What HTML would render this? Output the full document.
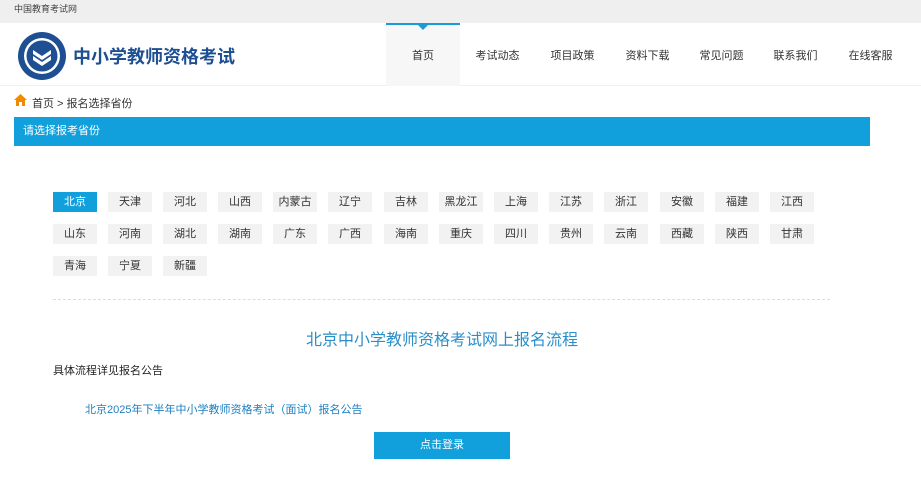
<!DOCTYPE html>
<html><head><meta charset="utf-8"><style>
*{margin:0;padding:0;box-sizing:border-box}
body{width:921px;height:500px;overflow:hidden;background:#fff;font-family:"Liberation Sans","Noto Sans CJK SC",sans-serif;color:#333;position:relative}
.a{position:absolute}
.top{left:0;top:0;width:921px;height:23px;background:#efefef;font-size:9px;line-height:18px;padding-left:14px;color:#444}
.hdr{left:0;top:23px;width:921px;height:63px;background:#fff;border-bottom:1px solid #f0f0f0}
.nav{top:23px;height:63px;line-height:66px;font-size:11px;text-align:center;color:#333}
.prov{width:44px;height:20px;line-height:20px;text-align:center;font-size:11px;background:#f2f2f2;color:#333}
</style></head><body>
<div class="a top">中国教育考试网</div>
<div class="a hdr"></div>
<svg class="a" style="left:17px;top:31px" width="50" height="50" viewBox="0 0 50 50">
<circle cx="25" cy="25" r="24" fill="#1e4f92"/><circle cx="25" cy="25" r="18" fill="#fff"/><circle cx="25" cy="25" r="15.5" fill="#1e4f92"/>
<path d="M16 19 L25 25 L34 19 L34 23 L25 29 L16 23Z M16 25 L25 31 L34 25 L34 29 L25 35 L16 29Z" fill="#fff"/>
</svg>
<div class="a" style="left:73px;top:43px;font-size:18px;color:#1e4f92;font-weight:bold">中小学教师资格考试</div>
<div class="a" style="left:386px;top:23px;width:74px;height:63px;background:#f7f7f7;border-top:2px solid #1a9ad6"></div>
<div class="a" style="left:418px;top:25px;width:0;height:0;border-left:5px solid transparent;border-right:5px solid transparent;border-top:5px solid #1a9ad6"></div>
<div class="a nav" style="left:386px;width:74px">首页</div>
<div class="a nav" style="left:460px;width:75px">考试动态</div>
<div class="a nav" style="left:535px;width:75px">项目政策</div>
<div class="a nav" style="left:610px;width:75px">资料下载</div>
<div class="a nav" style="left:684px;width:75px">常见问题</div>
<div class="a nav" style="left:758px;width:75px">联系我们</div>
<div class="a nav" style="left:833px;width:75px">在线客服</div>
<svg class="a" style="left:14px;top:94px" width="13" height="12" viewBox="0 0 13 12"><path d="M6.5 0 L13 6 L11 6 L11 12 L8 12 L8 8 L5 8 L5 12 L2 12 L2 6 L0 6Z" fill="#f08a00"/></svg>
<div class="a" style="left:32px;top:95px;font-size:11px;color:#333">首页 &gt; 报名选择省份</div>
<div class="a" style="left:14px;top:117px;width:856px;height:29px;background:#12a0dc;color:#fff;font-size:11px;line-height:28px;padding-left:9px">请选择报考省份</div>
<div class="a" style="left:53px;top:299px;width:777px;border-top:1px dashed #ddd"></div>
<div class="a" style="left:0;top:326px;width:884px;text-align:center;font-size:16px;color:#2a8fc8">北京中小学教师资格考试网上报名流程</div>
<div class="a" style="left:53px;top:362px;font-size:11px;color:#222">具体流程详见报名公告</div>
<div class="a" style="left:85px;top:401px;font-size:11px;color:#1d7fc0">北京2025年下半年中小学教师资格考试（面试）报名公告</div>
<div class="a" style="left:374px;top:432px;width:136px;height:27px;background:#12a0dc;color:#fff;font-size:11px;text-align:center;line-height:27px">点击登录</div>
<div class="a prov" style="left:53px;top:192px;background:#12a0dc;color:#fff">北京</div>
<div class="a prov" style="left:108px;top:192px">天津</div>
<div class="a prov" style="left:163px;top:192px">河北</div>
<div class="a prov" style="left:218px;top:192px">山西</div>
<div class="a prov" style="left:273px;top:192px">内蒙古</div>
<div class="a prov" style="left:328px;top:192px">辽宁</div>
<div class="a prov" style="left:384px;top:192px">吉林</div>
<div class="a prov" style="left:439px;top:192px">黑龙江</div>
<div class="a prov" style="left:494px;top:192px">上海</div>
<div class="a prov" style="left:549px;top:192px">江苏</div>
<div class="a prov" style="left:604px;top:192px">浙江</div>
<div class="a prov" style="left:660px;top:192px">安徽</div>
<div class="a prov" style="left:715px;top:192px">福建</div>
<div class="a prov" style="left:770px;top:192px">江西</div>
<div class="a prov" style="left:53px;top:224px">山东</div>
<div class="a prov" style="left:108px;top:224px">河南</div>
<div class="a prov" style="left:163px;top:224px">湖北</div>
<div class="a prov" style="left:218px;top:224px">湖南</div>
<div class="a prov" style="left:273px;top:224px">广东</div>
<div class="a prov" style="left:328px;top:224px">广西</div>
<div class="a prov" style="left:384px;top:224px">海南</div>
<div class="a prov" style="left:439px;top:224px">重庆</div>
<div class="a prov" style="left:494px;top:224px">四川</div>
<div class="a prov" style="left:549px;top:224px">贵州</div>
<div class="a prov" style="left:604px;top:224px">云南</div>
<div class="a prov" style="left:660px;top:224px">西藏</div>
<div class="a prov" style="left:715px;top:224px">陕西</div>
<div class="a prov" style="left:770px;top:224px">甘肃</div>
<div class="a prov" style="left:53px;top:256px">青海</div>
<div class="a prov" style="left:108px;top:256px">宁夏</div>
<div class="a prov" style="left:163px;top:256px">新疆</div>
</body></html>
